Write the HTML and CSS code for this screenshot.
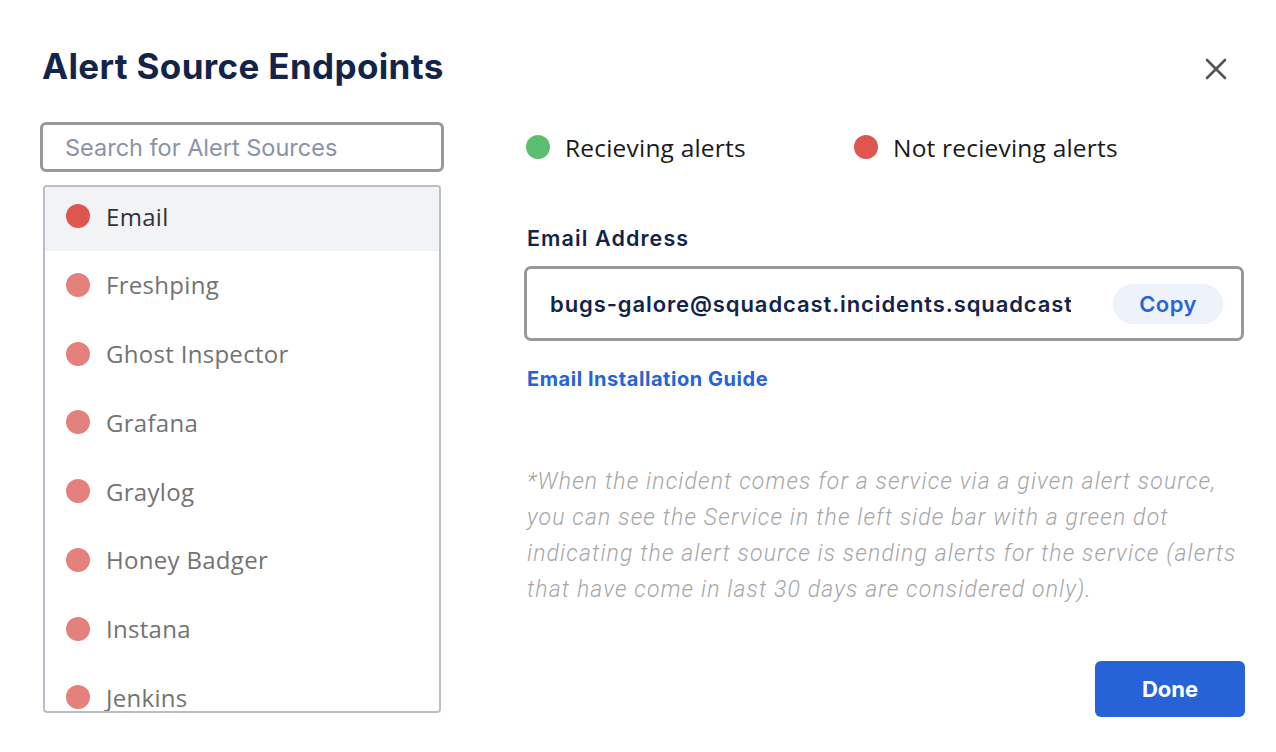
FILE: index.html
```html
<!DOCTYPE html>
<html>
<head>
<meta charset="utf-8">
<link rel="stylesheet" href="styles.css">
</head>
<body>
<div class="modal">
  <header class="header">
    <h1 class="title">Alert Source Endpoints</h1>
    <button class="close" aria-label="Close">
      <svg width="22" height="22" viewBox="0 0 22 22"><path d="M2 2L20 20M20 2L2 20" stroke="#555" stroke-width="2.6" stroke-linecap="round"/></svg>
    </button>
  </header>
  <div class="main">
    <div class="left">
      <div class="search">Search for Alert Sources</div>
      <ul class="list">
        <li class="item active"><span class="dot dot-strong"></span>Email</li>
        <li class="item"><span class="dot"></span>Freshping</li>
        <li class="item"><span class="dot"></span>Ghost Inspector</li>
        <li class="item"><span class="dot"></span>Grafana</li>
        <li class="item"><span class="dot"></span>Graylog</li>
        <li class="item"><span class="dot"></span>Honey Badger</li>
        <li class="item"><span class="dot"></span>Instana</li>
        <li class="item"><span class="dot"></span>Jenkins</li>
        <li class="item"><span class="dot"></span>Jira</li>
      </ul>
    </div>
    <div class="right">
      <div class="legend">
        <div class="legend-item"><span class="dot dot-green"></span>Recieving alerts</div>
        <div class="legend-item"><span class="dot dot-strong"></span>Not recieving alerts</div>
      </div>
      <div class="label">Email Address</div>
      <div class="field">
        <span class="address">bugs-galore@squadcast.incidents.squadcast.com</span>
        <button class="copy">Copy</button>
      </div>
      <a class="guide" href="#">Email Installation Guide</a>
      <p class="note">*When the incident comes for a service via a given alert source, you can see the Service in the left side bar with a green dot indicating the alert source is sending alerts for the service (alerts that have come in last 30 days are considered only).</p>
      <div class="actions"><button class="done">Done</button></div>
    </div>
  </div>
</div>
</body>
</html>
```

FILE: styles.css
```css
* { box-sizing: border-box; }
html, body { margin: 0; padding: 0; background: #fff; }
body { font-family: "Open Sans", "Liberation Sans", sans-serif; width: 1276px; height: 752px; overflow: hidden; }

.modal { padding: 42px 32px 0 40px; }

.header { display: flex; align-items: center; justify-content: space-between; height: 48px; }
.title { margin: 0 0 0 2px; font-family: Inter, "Liberation Sans", sans-serif; font-weight: 700; font-size: 35px; line-height: 44px; color: #13244a; letter-spacing: 0.35px; }
.close { border: 0; background: none; padding: 0; width: 24px; height: 24px; margin-right: 16px; margin-top: 6px; display: flex; align-items: center; justify-content: center; }

.main { display: grid; grid-template-columns: 404px 720px; column-gap: 80px; margin-top: 32px; height: 595px; }

.left { display: flex; flex-direction: column; }
.search { height: 50px; border: 3px solid #999; border-radius: 6px; padding: 0 22px; font-family: Inter, "Liberation Sans", sans-serif; font-size: 23.5px; line-height: 46px; color: #8a93a6; }
.list { list-style: none; margin: 13px 3px 0 3px; padding: 0; height: 528px; overflow: hidden; border: 2px solid #b8bdc7; border-radius: 4px; }
.item { display: flex; align-items: center; height: 64px; margin-bottom: 4.75px; padding: 0 0 6px 21px; font-size: 24px; letter-spacing: 0.3px; color: #737373; }
.item.active { background: #f2f3f5; color: #333; }
.dot { width: 24px; height: 24px; border-radius: 50%; background: #e5817c; margin-right: 16px; flex: none; }
.dot-strong { background: #df5550; }
.dot-green { background: #5bbf72; }

.right { display: flex; flex-direction: column; }
.legend { display: flex; height: 50px; align-items: center; }
.legend-item { display: flex; align-items: center; font-size: 24.5px; letter-spacing: 0.2px; color: #1a1a1a; width: 326px; margin-left: 2px; }
.legend-item .dot { margin-right: 15px; }

.label { margin-top: 44px; margin-left: 3px; font-family: Inter, "Liberation Sans", sans-serif; font-weight: 600; font-size: 21.5px; letter-spacing: 1.1px; line-height: 44px; color: #13244a; }
.field { margin-top: 6px; height: 75px; border: 3px solid #999; border-radius: 7px; display: flex; align-items: center; padding: 0 18px 0 23px; }
.address { flex: 1; overflow: hidden; white-space: nowrap; font-family: Inter, "Liberation Sans", sans-serif; font-weight: 600; font-size: 22px; letter-spacing: 0.9px; color: #13244a; margin-right: 42px; }
.copy { border: 0; background: #eef3fb; border-radius: 20px; width: 110px; height: 40px; font-family: Inter, "Liberation Sans", sans-serif; font-weight: 600; font-size: 22px; letter-spacing: 0.4px; color: #2a63d8; padding: 0; }

.guide { margin-top: 23px; margin-left: 3px; font-family: Inter, "Liberation Sans", sans-serif; font-weight: 700; font-size: 20px; letter-spacing: 0.55px; line-height: 30px; color: #2563d6; text-decoration: none; align-self: flex-start; }

.note { margin: 70px 0 0 3px; font-family: Roboto, "Liberation Sans", sans-serif; font-weight: 300; font-style: italic; font-size: 23px; letter-spacing: 1.15px; line-height: 36px; color: #a6a6a6; }

.actions { margin-top: auto; display: flex; justify-content: flex-end; margin-right: -1px; }
.done { width: 150px; height: 56px; border: 0; border-radius: 6px; background: #2563d6; color: #fff; font-family: Inter, "Liberation Sans", sans-serif; font-weight: 700; font-size: 22px; }
```
